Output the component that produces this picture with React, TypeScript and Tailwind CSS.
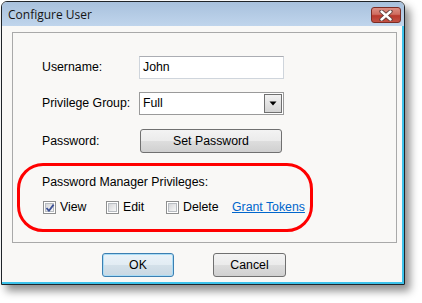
import { ReactNode } from 'react';

const Checkbox = ({ checked }: { checked?: boolean }) => (
  <div className="relative w-[13px] h-[13px] border border-[#8e8f8f] bg-white p-[1px]">
    <div className="w-full h-full border border-[#b8bcc1] bg-gradient-to-br from-[#d6d7d9] to-[#f7f7f7]" />
    {checked && (
      <svg className="absolute left-[1px] top-[1px]" width="10" height="10" viewBox="0 0 10 10">
        <path d="M1.5 5 L4 7.8 L8.6 1.6" fill="none" stroke="#3d5196" strokeWidth="1.8" strokeLinejoin="round" />
      </svg>
    )}
  </div>
);

const CheckItem = ({ label, checked, width }: { label: string; checked?: boolean; width: string }) => (
  <div className={`flex items-center gap-[4px] ${width}`}>
    <Checkbox checked={checked} />
    <span>{label}</span>
  </div>
);

const Row = ({ label, children, className }: { label: string; children: ReactNode; className: string }) => (
  <div className={`flex items-center ${className}`}>
    <span className="w-[97px]">{label}</span>
    {children}
  </div>
);

const btn =
  'rounded-[3px] border bg-[linear-gradient(#f3f3f3_0%,#ebebeb_48%,#dddddd_52%,#d0d0d0_100%)] flex items-center justify-center';

const App = () => {
  return (
    <div className="relative w-[422px] h-[303px] bg-white overflow-hidden text-black" style={{ fontFamily: '"Liberation Sans", Arial, sans-serif' }}>
      <div className="ml-[1px] mt-[1px] w-[404px] h-[284px] border border-[#1f2429] rounded-t-[6px] flex flex-col shadow-[5px_6px_9px_rgba(0,0,0,0.45)]">
        {/* title bar */}
        <div className="h-[24px] rounded-t-[5px] bg-gradient-to-b from-[#a8c1dd] to-[#c0d5ec] flex items-start justify-between pl-[6px] pr-[3px]">
          <span className="mt-[4px] text-[12px] text-[#151515]" style={{ fontFamily: '"Open Sans", "Noto Sans", sans-serif' }}>
            Configure User
          </span>
          <div className="mt-[5px] w-[30px] h-[16px] rounded-[3px] border border-[#7b2c24] bg-[linear-gradient(#dd8e84_0%,#cf6d60_45%,#b9382c_55%,#c25246_100%)] flex items-center justify-center">
            <svg width="14" height="11" viewBox="0 0 14 11">
              <path d="M2.5 1.5 L11.5 9.5 M11.5 1.5 L2.5 9.5" stroke="#5a3a38" strokeWidth="4.2" strokeLinecap="round" />
              <path d="M2.5 1.5 L11.5 9.5 M11.5 1.5 L2.5 9.5" stroke="#ffffff" strokeWidth="2.4" strokeLinecap="round" />
            </svg>
          </div>
        </div>

        {/* client area */}
        <div className="flex-1 bg-[#f9f8f6] border-r-2 border-b-2 border-[#3cc2ea] flex flex-col">
          <div className="ml-[10px] mt-[6px] w-[385px] h-[211px] border border-[#a9a9a9] pl-[29px] text-[12.3px] flex flex-col">
            <Row label="Username:" className="mt-[23px] h-[23px]">
              <div className="w-[145px] h-[23px] border border-[#cfd5dc] border-t-[#abadb3] bg-white pl-[3px] flex items-center">
                John
              </div>
            </Row>
            <Row label="Privilege Group:" className="mt-[13px] h-[23px]">
              <div className="w-[145px] h-[23px] border border-[#9a9a9a] bg-white pl-[3px] pr-[1px] flex items-center justify-between">
                <span>Full</span>
                <div className="w-[18px] h-[19px] border border-[#707070] bg-gradient-to-b from-[#f2f2f2] to-[#d4d4d4] flex items-center justify-center">
                  <svg width="8" height="5" viewBox="0 0 8 5">
                    <path d="M0.5 0.5 L7.5 0.5 L4 4.5 Z" fill="#000" />
                  </svg>
                </div>
              </div>
            </Row>
            <Row label="Password:" className="mt-[14px] h-[24px]">
              <div className={`ml-[1px] w-[142px] h-[24px] border-[#707070] ${btn}`}>Set Password</div>
            </Row>
            <div className="mt-[22px] h-[15px] leading-[15px]">Password Manager Privileges:</div>
            <div className="mt-[10px] h-[15px] flex items-center pl-[1px]">
              <CheckItem label="View" checked width="w-[63px]" />
              <CheckItem label="Edit" width="w-[60px]" />
              <CheckItem label="Delete" width="w-[66px]" />
              <span className="text-[#0066cc] underline">Grant Tokens</span>
            </div>
          </div>

          <div className="mt-[10px] pl-[100px] flex gap-[39px] text-[12.3px]">
            <div className="w-[72px] h-[24px] rounded-[3px] border border-[#3c7fb1] shadow-[inset_0_0_0_1px_#a9dcf6] bg-[linear-gradient(#eaf3f9_0%,#e2ecf3_48%,#d3e0e9_52%,#c9d8e3_100%)] flex items-center justify-center">
              OK
            </div>
            <div className={`w-[73px] h-[24px] border-[#707070] ${btn}`}>Cancel</div>
          </div>
        </div>
      </div>

      {/* annotation */}
      <div className="absolute left-[17px] top-[163px] w-[296px] h-[69px] border-[3px] border-[#ff0000] rounded-[26px]" />
    </div>
  );
};

export default App;
